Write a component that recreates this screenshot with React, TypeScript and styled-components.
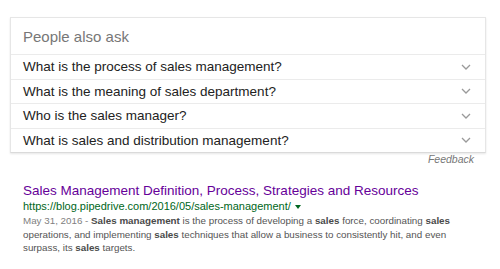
import React from 'react';
import styled, { createGlobalStyle } from 'styled-components';

const GlobalStyle = createGlobalStyle`
  body {
    margin: 0;
    background: #fff;
    font-family: "Liberation Sans", Arial, sans-serif;
  }
`;

const Page = styled.div`
  width: 476px;
  padding: 17px 0 0 10px;
`;

const Card = styled.div`
  border: 1px solid #e6e6e6;
  border-bottom-color: #dadada;
  box-shadow: 0 1px 2px rgba(0, 0, 0, .1);
  background: #fff;
`;

const Header = styled.div`
  height: 36px;
  display: flex;
  align-items: center;
  padding-left: 12px;
  font-size: 15px;
  color: #777;
`;

const Question = styled.div`
  height: 23.5px;
  display: flex;
  align-items: center;
  justify-content: space-between;
  padding: 0 14px 0 12px;
  border-top: 1px solid #ebebeb;
  font-size: 13.5px;
  color: #222;
`;

const Chevron = styled.svg`
  width: 10px;
  height: 6px;
  flex: none;
`;

const Feedback = styled.div`
  text-align: right;
  padding-right: 12px;
  font-size: 10.5px;
  line-height: 13px;
  font-style: italic;
  color: #777;
`;

const Result = styled.div`
  padding: 17px 0 0 13px;
`;

const Title = styled.div`
  font-size: 13.5px;
  line-height: 16px;
  color: #609;
`;

const UrlLine = styled.div`
  display: flex;
  align-items: center;
  gap: 4px;
  font-size: 11px;
  line-height: 14px;
  color: #006621;
`;

const Arrow = styled.span`
  width: 0;
  height: 0;
  border-left: 3px solid transparent;
  border-right: 3px solid transparent;
  border-top: 4px solid #006621;
  margin-top: 1px;
`;

const Snippet = styled.div`
  width: 440px;
  margin-top: 1px;
  font-size: 9.8px;
  line-height: 13.5px;
  color: #545454;

  b {
    color: #4a4a4a;
  }
`;

const DateText = styled.span`
  color: #808080;
`;

const questions = [
  'What is the process of sales management?',
  'What is the meaning of sales department?',
  'Who is the sales manager?',
  'What is sales and distribution management?',
];

const App = () => (
  <>
    <GlobalStyle />
    <Page>
      <Card>
        <Header>People also ask</Header>
        {questions.map(q => (
          <Question key={q}>
            <span>{q}</span>
            <Chevron viewBox="0 0 10 6">
              <path d="M1 1l4 4 4-4" fill="none" stroke="#9a9a9a" strokeWidth="1.3" />
            </Chevron>
          </Question>
        ))}
      </Card>
      <Feedback>Feedback</Feedback>
      <Result>
        <Title>Sales Management Definition, Process, Strategies and Resources</Title>
        <UrlLine>
          https://blog.pipedrive.com/2016/05/sales-management/
          <Arrow />
        </UrlLine>
        <Snippet>
          <DateText>May 31, 2016 - </DateText>
          <b>Sales management</b> is the process of developing a <b>sales</b> force, coordinating <b>sales</b> operations,
          and implementing <b>sales</b> techniques that allow a business to consistently hit, and even surpass, its{' '}
          <b>sales</b> targets.
        </Snippet>
      </Result>
    </Page>
  </>
);

export default App;
